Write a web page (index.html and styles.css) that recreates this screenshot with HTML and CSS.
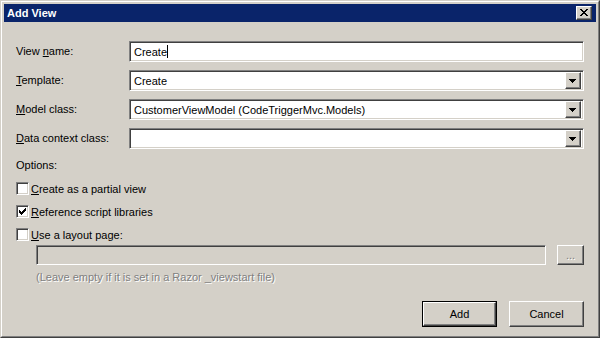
FILE: index.html
```html
<!DOCTYPE html>
<html>
<head>
<meta charset="utf-8">
<link rel="stylesheet" href="styles.css">
</head>
<body>
<div class="frame">
  <div class="frame-inner">
    <div class="titlebar">
      <span class="title">Add View</span>
      <div class="close raised">
        <svg width="8" height="7" viewBox="0 0 8 7" shape-rendering="crispEdges"><path d="M0 0h2v1h-2z M6 0h2v1h-2z M1 1h2v1h-2z M5 1h2v1h-2z M2 2h4v1h-4z M3 3h2v1h-2z M2 4h4v1h-4z M1 5h2v1h-2z M5 5h2v1h-2z M0 6h2v1h-2z M6 6h2v1h-2z" fill="#000"/></svg>
      </div>
    </div>
    <div class="content">
      <div class="form">
        <label class="lbl">View <u>n</u>ame:</label>
        <div class="field sunken"><span class="val">Create</span><span class="caret"></span></div>
        <label class="lbl"><u>T</u>emplate:</label>
        <div class="field sunken combo"><span class="val">Create</span><div class="drop raised"><svg width="7" height="4" viewBox="0 0 7 4" shape-rendering="crispEdges"><path d="M0 0h7v1h-7z M1 1h5v1h-5z M2 2h3v1h-3z M3 3h1v1h-1z" fill="#000"/></svg></div></div>
        <label class="lbl"><u>M</u>odel class:</label>
        <div class="field sunken combo"><span class="val">CustomerViewModel (CodeTriggerMvc.Models)</span><div class="drop raised"><svg width="7" height="4" viewBox="0 0 7 4" shape-rendering="crispEdges"><path d="M0 0h7v1h-7z M1 1h5v1h-5z M2 2h3v1h-3z M3 3h1v1h-1z" fill="#000"/></svg></div></div>
        <label class="lbl"><u>D</u>ata context class:</label>
        <div class="field sunken combo"><span class="val"></span><div class="drop raised"><svg width="7" height="4" viewBox="0 0 7 4" shape-rendering="crispEdges"><path d="M0 0h7v1h-7z M1 1h5v1h-5z M2 2h3v1h-3z M3 3h1v1h-1z" fill="#000"/></svg></div></div>
      </div>
      <div class="options-title">Options:</div>
      <div class="check-row"><span class="box sunken"></span><span><u>C</u>reate as a partial view</span></div>
      <div class="check-row"><span class="box sunken"><svg width="7" height="7" viewBox="0 0 7 7" shape-rendering="crispEdges"><path d="M0 2h1v3h-1z M1 3h1v3h-1z M2 4h1v3h-1z M3 3h1v3h-1z M4 2h1v3h-1z M5 1h1v3h-1z M6 0h1v3h-1z" fill="#000"/></svg></span><span><u>R</u>eference script libraries</span></div>
      <div class="check-row"><span class="box sunken"></span><span><u>U</u>se a layout page:</span></div>
      <div class="layout-row">
        <div class="field sunken disabled"></div>
        <div class="btn-dots raised"><span class="dis">...</span></div>
      </div>
      <div class="hint">(Leave empty if it is set in a Razor _viewstart file)</div>
      <div class="buttons">
        <div class="btn default"><div class="raised btn-in">Add</div></div>
        <div class="btn raised">Cancel</div>
      </div>
    </div>
  </div>
</div>
</body>
</html>
```

FILE: styles.css
```css
* { box-sizing: border-box; }
html, body { margin: 0; padding: 0; }
body {
  width: 600px;
  height: 338px;
  background: #d4d0c8;
  font-family: "Liberation Sans", Arial, sans-serif;
  font-size: 11px;
  color: #000;
  overflow: hidden;
}
.frame {
  width: 600px;
  height: 338px;
  border: 1px solid;
  border-color: #d4d0c8 #404040 #404040 #d4d0c8;
}
.frame-inner {
  height: 100%;
  border: 1px solid;
  border-color: #ffffff #808080 #808080 #ffffff;
  padding: 2px;
  display: flex;
  flex-direction: column;
}
.titlebar {
  height: 18px;
  background: #0a246a;
  display: flex;
  align-items: center;
  justify-content: space-between;
  padding: 0 4px 0 3px;
}
.title {
  color: #fff;
  font-weight: bold;
  font-size: 11px;
  letter-spacing: 0;
}
.raised {
  background: #d4d0c8;
  border: 1px solid;
  border-color: #ffffff #404040 #404040 #ffffff;
  box-shadow: inset -1px -1px 0 #808080;
}
.sunken {
  background: #fff;
  border: 1px solid;
  border-color: #808080 #ffffff #ffffff #808080;
  box-shadow: inset 1px 1px 0 #404040, inset -1px -1px 0 #d4d0c8;
}
.close {
  width: 16px;
  height: 14px;
  display: flex;
  align-items: center;
  justify-content: center;
  padding-right: 1px;
  padding-bottom: 1px;
}
.close svg { display: block; }
.content {
  flex: 1;
  padding: 19px 12px 0 12px;
  display: flex;
  flex-direction: column;
}
.form {
  display: grid;
  grid-template-columns: 113px 1fr;
  grid-auto-rows: 21px;
  row-gap: 8px;
  align-items: center;
}
.lbl { line-height: 13px; }
.field {
  height: 21px;
  display: flex;
  align-items: center;
  padding: 0 2px 0 4px;
}
.val { white-space: nowrap; flex: 1; }
.field .caret {
  width: 1px;
  height: 13px;
  background: #000;
  margin-left: 0;
}
.field:not(.combo) .val { flex: none; }
.combo { padding-right: 2px; }
.drop {
  width: 16px;
  height: 17px;
  display: flex;
  align-items: center;
  justify-content: center;
  padding-right: 1px;
  padding-top: 1px;
}
.drop svg { display: block; }
.options-title {
  margin-top: 9px;
  height: 15px;
  line-height: 15px;
}
.check-row {
  margin-top: 8px;
  height: 15px;
  display: flex;
  align-items: center;
  gap: 2px;
}
.box {
  width: 13px;
  height: 13px;
  display: flex;
  align-items: center;
  justify-content: center;
}
.box svg { display: block; }
.layout-row {
  margin-top: 3px;
  margin-left: 20px;
  display: flex;
  gap: 11px;
  height: 20px;
}
.field.disabled {
  flex: 1;
  height: 20px;
  background: #d4d0c8;
}
.btn-dots {
  width: 27px;
  height: 20px;
  display: flex;
  align-items: center;
  justify-content: center;
}
.dis {
  color: #808080;
  text-shadow: 1px 1px 0 #fff;
  line-height: 11px;
}
.hint {
  margin-top: 6px;
  margin-left: 20px;
  line-height: 13px;
  color: #808080;
  text-shadow: 1px 1px 0 #fff;
}
.buttons {
  margin-top: 17px;
  display: flex;
  justify-content: flex-end;
  gap: 12px;
}
.btn {
  width: 75px;
  height: 26px;
  display: flex;
  align-items: center;
  justify-content: center;
}
.btn.default {
  border: 1px solid #000;
}
.btn-in {
  width: 100%;
  height: 100%;
  display: flex;
  align-items: center;
  justify-content: center;
}
```
